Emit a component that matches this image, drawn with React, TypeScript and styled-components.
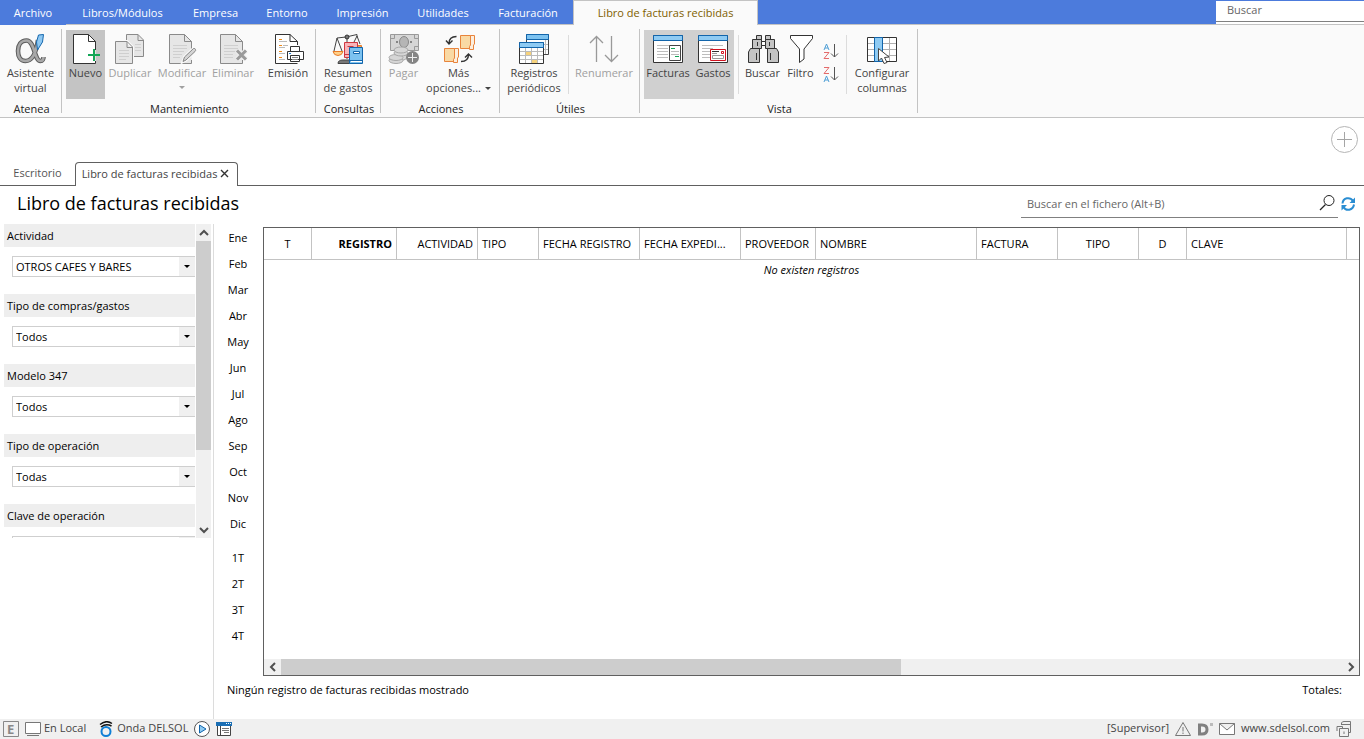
import React from "react";
import styled, { createGlobalStyle, css } from "styled-components";

const GlobalStyle = createGlobalStyle`
  * { box-sizing: border-box; }
  body {
    margin: 0;
    background: #fff;
    color: #000;
    font-family: "Open Sans", "Noto Sans", sans-serif;
    font-size: 11px;
    line-height: 15px;
  }
  button, input, select { font: inherit; color: inherit; margin: 0; }
  button { border: 0; padding: 0; background: none; cursor: pointer; }
`;

const Window = styled.div`
  display: flex;
  flex-direction: column;
  min-height: 100vh;
`;

/* ---------- menu bar ---------- */

const MenuBar = styled.nav`
  display: flex;
  height: 25px;
  background: #4c7bdc;
`;

const MenuItem = styled.button<{ $width: number; $first?: boolean }>`
  width: ${(p) => p.$width}px;
  color: #fff;
  white-space: nowrap;
  ${(p) => !p.$first && css`border-bottom: 1px solid #c3c3c3;`}
`;

const ActiveMenuItem = styled.button`
  width: 185px;
  padding-bottom: 2px;
  background: #fafafa;
  color: #7f6000;
  border: 1px solid #c3c3c3;
  border-bottom: 0;
  white-space: nowrap;
`;

const MenuSpacer = styled.div`
  flex: 1;
  border-bottom: 1px solid #c3c3c3;
`;

const MenuSearch = styled.div`
  width: 148px;
  padding-top: 1px;
  border-bottom: 1px solid #c3c3c3;
  background: linear-gradient(#4c7bdc 1px, #fff 1px);
`;

const MenuSearchInput = styled.input`
  display: block;
  width: 100%;
  height: 21px;
  padding: 0 11px 3px;
  border: 0;
  border-bottom: 1px solid #808080;
  outline: 0;
  background: transparent;
  &::placeholder { color: #666; opacity: 1; }
`;

/* ---------- ribbon ---------- */

const Ribbon = styled.div`
  display: flex;
  height: 93px;
  padding-top: 4px;
  background: #fafafa;
  border-bottom: 1px solid #c3c3c3;
`;

const Group = styled.section<{ $width: number }>`
  display: flex;
  flex-direction: column;
  gap: 2px;
  width: ${(p) => p.$width}px;
  height: 84px;
  padding: 1px 4px 0;
  border-right: 1px solid #c3c3c3;
`;

const GroupRow = styled.div`
  display: flex;
  justify-content: center;
`;

const GroupTitle = styled.h2`
  margin: 0;
  padding-left: 2px;
  font-size: 11px;
  font-weight: 400;
  line-height: 15px;
  text-align: center;
  color: #222;
`;

const RibbonButton = styled.button<{ $width: number; $pressed?: string }>`
  display: flex;
  flex-direction: column;
  align-items: center;
  width: ${(p) => p.$width}px;
  height: 69px;
  padding-top: 3px;
  color: #444;
  background: ${(p) => p.$pressed || "transparent"};
  white-space: nowrap;
  flex-shrink: 0;
  &:disabled { color: #a0a0a0; cursor: default; }
`;

const RibbonDivider = styled.span`
  width: 1px;
  height: 59px;
  margin: 5px 4px 0;
  background: #dcdcdc;
`;

const Caret = styled.span`
  display: inline-block;
  margin-left: 4px;
  vertical-align: 2px;
  border: 3px solid transparent;
  border-top-color: currentColor;
  border-bottom: 0;
`;

const CaretBelow = styled(Caret)`
  margin: 6px 0 0;
`;

const SortColumn = styled.div`
  display: flex;
  flex-direction: column;
  gap: 6px;
  width: 23px;
  padding: 13px 2px 0 3px;
`;

const Icon = styled.svg`
  display: block;
  flex-shrink: 0;
  fill: none;
`;

const Icon32 = ({ children }: { children: React.ReactNode }) => (
  <Icon width="32" height="32" viewBox="0 0 32 32" aria-hidden="true">
    {children}
  </Icon>
);

const Page = ({ stroke, fill }: { stroke: string; fill: string }) => (
  <>
    <path d="M18.500 1.500H3.500V30.500H25.500V8.500Z" fill={fill} />
    <path d="M25.500 18V8.500L18.500 1.500H3.500V30.500H25.500V27M18.500 1.500V8.500H25.500" stroke={stroke} />
  </>
);

const AssistantIcon = () => (
  <Icon32>
    <path d="M23 7C21 21 17 28 10.500 28C5.500 28 3 24 3 18S6 7.500 11.500 7.500C20 7.500 19 28 25.500 28C27.500 28 28.500 26 28.500 24" stroke="#5d5d5d" strokeWidth="4.600" />
    <path d="M23 7C21 21 17 28 10.500 28C5.500 28 3 24 3 18S6 7.500 11.500 7.500C20 7.500 19 28 25.500 28C27.500 28 28.500 26 28.500 24" stroke="#a8a8a8" strokeWidth="2.600" />
    <path d="M23.500 2L28.500 1.500L27.500 9L22.500 17L21.500 9Z" fill="#8ec8f2" stroke="#1668ae" />
  </Icon32>
);

const NewIcon = () => (
  <Icon32>
    <path d="M18.500 1.500H3.500V30.500H25.500V8.500Z" fill="#fff" />
    <path d="M25.500 17V8.500L18.500 1.500H3.500V30.500H25.500V28M18.500 1.500V8.500H25.500" stroke="#333" />
    <path d="M24 16V28M18 22H30" stroke="#12a656" strokeWidth="2" />
  </Icon32>
);

const DuplicateIcon = () => (
  <Icon32>
    <path d="M12.500 1.500H24L29.500 7V23.500H12.500Z" fill="#e6e6e6" stroke="#8a8a8a" />
    <path d="M24 1.500V7.500H29.500" stroke="#8a8a8a" />
    <path d="M21 11.500H27M21 14.500H27M21 17.500H27" stroke="#cfcfcf" />
    <path d="M1.500 8.500H13L18.500 14V30.500H1.500Z" fill="#e6e6e6" stroke="#fafafa" strokeWidth="3" />
    <path d="M1.500 8.500H13L18.500 14V30.500H1.500ZM13 8.500V14.500H18.500" fill="#e6e6e6" stroke="#8a8a8a" />
    <path d="M5 17.500H15M5 20.500H15M5 23.500H15M5 26.500H12" stroke="#cfcfcf" />
  </Icon32>
);

const EditIcon = () => (
  <Icon32>
    <Page stroke="#8a8a8a" fill="#e6e6e6" />
    <path d="M7 12.500H21M7 15.500H21M7 18.500H18M7 21.500H16M7 24.500H14" stroke="#cfcfcf" />
    <path d="M17 28.500L18.500 24L27.500 15.500Q29 15 29.500 16.500Q30 17.500 29 18.500L20 27Z" fill="#d4d4d4" stroke="#fafafa" strokeWidth="3" />
    <path d="M17 28.500L18.500 24L27.500 15.500Q29 15 29.500 16.500Q30 17.500 29 18.500L20 27Z" fill="#d4d4d4" stroke="#858585" />
  </Icon32>
);

const DeleteIcon = () => (
  <Icon32>
    <Page stroke="#8a8a8a" fill="#e6e6e6" />
    <path d="M7 12.500H21M7 15.500H21M7 18.500H18M7 21.500H16M7 24.500H16" stroke="#cfcfcf" />
    <path d="M20 17.500L29 26.500M29 17.500L20 26.500" stroke="#eee" strokeWidth="5" />
    <path d="M20 17.500L29 26.500M29 17.500L20 26.500" stroke="#9a9a9a" strokeWidth="3" />
  </Icon32>
);

const IssueIcon = () => (
  <Icon32>
    <path d="M25.500 12V8.500L18 1.500H3.500V30.500H25.500V8.500Z" fill="#fff" />
    <path d="M25.500 12V8.500L18 1.500H3.500V30.500H25.500M18 1.500V8.500H25.500" stroke="#333" />
    <path d="M7 6.500H10M7 12.500H10M7 18.500H10M7 24.500H10" stroke="#ef8a17" />
    <path d="M7 8.500H15M11 12.500H16M7 14.500H13M7 20.500H13M7 26.500H13" stroke="#bbb" />
    <path d="M15.500 18.500H31.500V26.500H15.500ZM18.500 18.500V13.500H27.500V18.500M18.500 22.500H27.500V28.500H18.500Z" fill="#fff" stroke="#333" />
    <path d="M17 20.500H19" stroke="#1a7bd0" />
    <path d="M20 24.500H26M20 26.500H26" stroke="#888" />
  </Icon32>
);

const SummaryIcon = () => (
  <Icon32>
    <path d="M5 5L14 4L25 1.500V4M15 5V26M5 5L2 18M5 5L10 18M25 3L28 11M25 3L22 9" stroke="#444" />
    <circle cx="15" cy="4" r="2" fill="#777" stroke="#333" />
    <path d="M1 18.500H11Q10 22.500 6 22.500T1 18.500Z" fill="#ffd18a" stroke="#e87b28" />
    <path d="M6 30.500Q6 27 11 27H19V30.500Z" fill="#777" stroke="#444" />
    <path d="M25 12.500H29.500V14H25Z" fill="#f7c77c" stroke="#e87b28" />
    <path d="M12.500 9.500H25.500V24.500H12.500Z" fill="#f8b4b8" stroke="#cf3740" />
    <path d="M12.500 21.500H25M15.500 13.500H21.500" stroke="#cf3740" />
    <path d="M17.500 14.500H30.500V30.500H17.500Z" fill="#7cc2f0" stroke="#1265ab" />
    <path d="M17.500 27.500H30" stroke="#1265ab" />
    <path d="M19 28.500H30" stroke="#fff" />
    <path d="M21.500 18.500H27.500V20.500H21.500Z" fill="#fff" stroke="#1265ab" />
  </Icon32>
);

const PayIcon = () => (
  <Icon32>
    <path d="M2.500 1.500H30.500V17.500H2.500Z" fill="#d6d6d6" stroke="#9a9a9a" />
    <path d="M2 5.500H6.500V1.500M26.500 1.500V5.500H31M31 13.500H26.500V17.500" stroke="#999" />
    <ellipse cx="16" cy="9" rx="4.500" ry="5.500" fill="#b5b5b5" stroke="#8a8a8a" />
    <path d="M8 9H10M22 9H24" stroke="#858585" strokeWidth="2" />
    <g fill="#d6d6d6" stroke="#a8a8a8">
      <ellipse cx="12" cy="24" rx="7" ry="3.500" />
      <ellipse cx="8" cy="27.500" rx="7" ry="3" />
      <ellipse cx="8" cy="24.500" rx="7" ry="3" />
      <ellipse cx="13" cy="20" rx="7" ry="3" />
      <ellipse cx="13" cy="17" rx="7" ry="3" />
    </g>
    <circle cx="24.500" cy="24.500" r="6.500" fill="#858585" />
    <path d="M24.500 20V29M20 24.500H29" stroke="#eee" />
  </Icon32>
);

const MoreIcon = () => (
  <Icon32>
    <g fill="#f9d9a4" stroke="#e8843c">
      <path d="M17.500 2.500H28.500V15.500H17.500Z" />
      <path d="M27.500 2.500H31.500V11L30.500 12V16.500H26.500V13.500L27.500 12Z" fill="#fceedd" />
      <path d="M1.500 15.500H12.500V28.500H1.500Z" />
      <path d="M11.500 15.500H15.500V24L14.500 25V29.500H10.500V26.500L11.500 25Z" fill="#fceedd" />
    </g>
    <path d="M13.500 3.500Q6 3.500 6 10.500M3 7.500L6 11L9.500 7.500" stroke="#333" strokeWidth="1.400" />
    <path d="M18 28.500Q25.500 28.500 25.500 21.500M22 24.500L25.500 21L29 24.500" stroke="#333" strokeWidth="1.400" />
  </Icon32>
);

const CalendarIcon = () => (
  <Icon32>
    <path d="M8.500 1.500H30.500V21.500H8.500Z" fill="#fff" stroke="#444" />
    <path d="M8.500 1.500H30.500V6.500H8.500Z" fill="#7cc2f0" stroke="#1265ab" />
    <path d="M27.500 7V21M26 11.500H30M26 16.500H30" stroke="#bbb" />
    <path d="M1.500 9.500H25.500V30.500H1.500Z" fill="#fff" stroke="#333" />
    <path d="M8 19H13V22H8ZM14 27H19V30H14Z" fill="#f6d27c" />
    <path d="M7.500 15V30M13.500 15V30M19.500 15V30M2 18.500H25M2 22.500H25M2 26.500H25" stroke="#bbb" />
    <path d="M1.500 9.500H25.500V14.500H1.500Z" fill="#8fcbf3" stroke="#1265ab" />
  </Icon32>
);

const RenumberIcon = () => (
  <Icon32>
    <path d="M8.500 29V3.500M2 10L8.500 3.500L15 10M23.500 3V28.500M17 22L23.500 28.500L30 22" stroke="#999" strokeWidth="1.300" />
  </Icon32>
);

const WindowFrame = () => (
  <>
    <path d="M1.500 2.500H30.500V29.500H1.500Z" fill="#fff" stroke="#333" />
    <path d="M1.500 2.500H30.500V7.500H1.500Z" fill="#8fcbf3" stroke="#1265ab" />
    <path d="M5 12.500H26M5 15.500H16M5 18.500H16M5 21.500H16M5 24.500H16" stroke="#bdbdbd" />
  </>
);

const InvoicesIcon = () => (
  <Icon32>
    <WindowFrame />
    <path d="M17.500 12.500H28.500V27.500H17.500Z" fill="#fff" stroke="#444" />
    <path d="M19 15.500H23M23 23.500H27" stroke="#12a656" />
    <path d="M19 18.500H27M19 21.500H27" stroke="#bbb" />
  </Icon32>
);

const ExpensesIcon = () => (
  <Icon32>
    <WindowFrame />
    <path d="M13.500 16.500H28.500V27.500H13.500Z" fill="#fff" stroke="#d0121f" />
    <path d="M15 18.500H22" stroke="#333" />
    <path d="M15 20.500H20M15.500 22.500H26.500V25.500H15.500Z" stroke="#999" />
    <path d="M24.500 18.500H26.500V20.500H24.500Z" stroke="#d0121f" />
  </Icon32>
);

const BinocularsIcon = () => (
  <Icon32>
    <g fill="#c4c4c4" stroke="#333">
      <path d="M9.500 2.500H14.500V7H9.500ZM18.500 2.500H23.500V7H18.500Z" />
      <path d="M5.500 6.500H14.500V15.500H5.500ZM18.500 6.500H27.500V15.500H18.500Z" />
      <path d="M14.500 8.500H18.500V12.500H14.500Z" fill="#fff" />
      <path d="M3.500 15.500H12.500V29.500H1.500V19ZM20.500 15.500H29.500L31.500 19V29.500H20.500Z" />
    </g>
    <path d="M9.500 20V27M23.500 20V27M10.500 9V13M22.500 9V13" stroke="#333" />
  </Icon32>
);

const FilterIcon = () => (
  <Icon32>
    <path d="M5.500 2.500H27.500V5.500L19 16V26L14.500 29.500V16L5.500 5.500Z" fill="#fff" stroke="#333" />
  </Icon32>
);

const ColumnsIcon = () => (
  <Icon32>
    <path d="M1.500 4.500H30.500V28.500H1.500Z" fill="#fff" stroke="#333" />
    <path d="M2 10.500H30M2 16.500H30M2 22.500H30M16.500 5V28M23.500 5V28" stroke="#b0b0b0" />
    <path d="M8.500 4.500H16.500V28.500H8.500Z" fill="#8fcbf3" stroke="#1265ab" />
    <path d="M12.500 15.500V28L15.500 25L18 30.500L21 29.500L18.500 24.500L23 24Z" fill="#fff" stroke="#444" />
  </Icon32>
);

const SortIcon = ({ reversed }: { reversed?: boolean }) => (
  <Icon width="18" height="17" viewBox="0 0 18 17" aria-hidden="true">
    <path d={reversed ? "M2 16L4.500 10L7 16M3 14H6" : "M2 7L4.500 1L7 7M3 5H6"} stroke="#4f9fd6" />
    <path d={reversed ? "M2 1.500H7L2 7.500H7" : "M2 9.500H7L2 15.500H7"} stroke="#e46a6a" />
    <path d="M12.500 1V14M9 10.500L12.500 14L16 10.500" stroke="#555" />
  </Icon>
);

/* ---------- document tabs ---------- */

const TabStrip = styled.div`
  display: flex;
  flex-direction: column;
  height: 68px;
`;

const AddRow = styled.div`
  display: flex;
  justify-content: flex-end;
  height: 44px;
  padding: 7px 5px 0 0;
`;

const AddButton = styled.button`
  width: 28px;
  height: 28px;
`;

const TabRow = styled.div`
  display: flex;
  height: 24px;
`;

const Tab = styled.button`
  width: 75px;
  padding-bottom: 2px;
  border-bottom: 1px solid #606060;
  color: #555;
`;

const ActiveTab = styled.div`
  display: flex;
  align-items: center;
  justify-content: center;
  gap: 3px;
  width: 163px;
  padding: 0 2px 2px 0;
  border: 1px solid #606060;
  border-bottom: 0;
  border-radius: 4px 4px 0 0;
  color: #444;
  white-space: nowrap;
`;

const CloseButton = styled.button`
  width: 9px;
  height: 9px;
`;

const TabRule = styled.div`
  flex: 1;
  border-bottom: 1px solid #606060;
`;

/* ---------- document header ---------- */

const TitleBar = styled.header`
  display: flex;
  justify-content: space-between;
  height: 38px;
  padding: 0 8px 0 17px;
`;

const Title = styled.h1`
  margin: 0;
  font-size: 18px;
  font-weight: 400;
  line-height: 34px;
`;

const SearchArea = styled.div`
  display: flex;
  gap: 2px;
  height: 32px;
`;

const FileSearch = styled.label`
  display: flex;
  align-items: center;
  width: 317px;
  height: 32px;
  padding: 3px 3px 0 6px;
  border-bottom: 1px solid #808080;
`;

const FileSearchInput = styled.input`
  flex: 1;
  min-width: 0;
  padding: 0;
  border: 0;
  outline: 0;
  &::placeholder { color: #666; opacity: 1; }
`;

const RefreshButton = styled.button`
  padding-top: 3px;
`;

/* ---------- filters ---------- */

const Body = styled.main`
  display: flex;
  flex: 1;
`;

const Sidebar = styled.aside`
  width: 214px;
  padding-left: 4px;
  border-right: 1px solid #dcdcdc;
`;

const FilterViewport = styled.div`
  display: flex;
  gap: 1px;
  height: 314px;
  overflow: hidden;
`;

const FilterList = styled.div`
  width: 191px;
`;

const FilterField = styled.div`
  display: flex;
  flex-direction: column;
  gap: 9px;
  height: 70px;
`;

const FilterLabel = styled.label`
  padding-left: 3px;
  background: #eee;
  line-height: 23px;
`;

const SelectBox = styled.div`
  position: relative;
  height: 21px;
  margin-left: 8px;
`;

const Select = styled.select`
  display: block;
  width: 100%;
  height: 21px;
  padding: 0 16px 0 3px;
  border: 1px solid #cfcfcf;
  border-right: 0;
  border-radius: 0;
  appearance: none;
  outline: 0;
  background: #fff;
`;

const SelectArrow = styled.span`
  position: absolute;
  top: 1px;
  right: 0;
  display: flex;
  align-items: center;
  justify-content: center;
  width: 16px;
  height: 19px;
  background: #f0f0f0;
  pointer-events: none;
  &::after {
    content: "";
    border: 3px solid transparent;
    border-top-color: #000;
    border-bottom: 0;
  }
`;

const VerticalScroll = styled.div`
  display: flex;
  flex-direction: column;
  width: 15px;
  background: #f0f0f0;
`;

const ScrollButton = styled.button<{ $width: number }>`
  display: flex;
  align-items: center;
  justify-content: center;
  width: ${(p) => p.$width}px;
  height: 17px;
`;

const VerticalThumb = styled.div`
  height: 209px;
  margin-bottom: auto;
  background: #cdcdcd;
`;

const Chevron = ({ d }: { d: string }) => (
  <Icon width="10" height="10" viewBox="0 0 10 10" aria-hidden="true">
    <path d={d} stroke="#505050" strokeWidth="2" />
  </Icon>
);

/* ---------- periods and grid ---------- */

const Content = styled.div`
  display: flex;
  flex: 1;
  flex-direction: column;
  min-width: 0;
`;

const Workspace = styled.div`
  display: flex;
  flex: 1;
`;

const Periods = styled.div`
  display: flex;
  flex-direction: column;
  width: 48px;
  margin-right: 1px;
`;

const Months = styled.div`
  display: flex;
  flex-direction: column;
  margin-bottom: 8px;
`;

const PeriodButton = styled.button`
  height: 26px;
`;

const GridFrame = styled.div`
  display: flex;
  flex: 1;
  flex-direction: column;
  justify-content: space-between;
  min-width: 0;
  margin: 3px 4px 0 0;
  border: 1px solid #606060;
`;

const Table = styled.table`
  width: 100%;
  table-layout: fixed;
  border-collapse: separate;
  border-spacing: 0;
`;

const HeadCell = styled.th<{ $align: string; $bold?: boolean; $last?: boolean }>`
  height: 32px;
  padding: 0 4px;
  border-bottom: 1px solid #c3c3c3;
  ${(p) => !p.$last && css`border-right: 1px solid #c3c3c3;`}
  font-weight: ${(p) => (p.$bold ? 700 : 400)};
  text-align: ${(p) => p.$align};
  white-space: nowrap;
`;

const EmptyCell = styled.td`
  padding: 2px 0;
  font-style: italic;
  text-align: center;
`;

const HorizontalScroll = styled.div`
  display: flex;
  align-items: center;
  justify-content: space-between;
  height: 16px;
  background: #f0f0f0;
`;

const ScrollTrack = styled.div`
  flex: 1;
`;

const HorizontalThumb = styled.div`
  width: 59%;
  height: 16px;
  max-width: 620px;
  background: #cdcdcd;
`;

const Summary = styled.footer`
  display: flex;
  justify-content: space-between;
  height: 43px;
  padding: 6px 22px 0 13px;
`;

/* ---------- status bar ---------- */

const StatusBar = styled.footer`
  display: flex;
  align-items: center;
  justify-content: space-between;
  height: 20px;
  padding: 0 12px 0 3px;
  background: #f0f0f0;
  color: #444;
`;

const StatusGroup = styled.div`
  display: flex;
  align-items: center;
  gap: 6px;
  line-height: 14px;
`;

const StatusItem = styled.button`
  display: flex;
  align-items: center;
  gap: 3px;
`;

const StatusText = styled.span`
  padding-bottom: 2px;
`;

const WaveItem = styled(StatusItem)`
  margin-left: 6px;
`;

const StatusLink = styled.a`
  padding-bottom: 2px;
  color: inherit;
  text-decoration: none;
`;

const StatusIcon = ({ children }: { children: React.ReactNode }) => (
  <Icon width="16" height="16" viewBox="0 0 16 16" aria-hidden="true">
    {children}
  </Icon>
);

const StatusLetter = styled.text`
  font-size: 13px;
  font-weight: 700;
`;

const menuItems = [
  { label: "Archivo", width: 66 },
  { label: "Libros/Módulos", width: 113 },
  { label: "Empresa", width: 73 },
  { label: "Entorno", width: 70 },
  { label: "Impresión", width: 81 },
  { label: "Utilidades", width: 80 },
  { label: "Facturación", width: 90 },
];

const filters = [
  { id: "actividad", label: "Actividad", value: "OTROS CAFES Y BARES" },
  { id: "compras", label: "Tipo de compras/gastos", value: "Todos" },
  { id: "modelo", label: "Modelo 347", value: "Todos" },
  { id: "operacion", label: "Tipo de operación", value: "Todas" },
  { id: "clave", label: "Clave de operación", value: "" },
];

const months = ["Ene", "Feb", "Mar", "Abr", "May", "Jun", "Jul", "Ago", "Sep", "Oct", "Nov", "Dic"];
const quarters = ["1T", "2T", "3T", "4T"];

const columns = [
  { label: "T", width: 48, align: "center" },
  { label: "REGISTRO", width: 85, align: "right", bold: true },
  { label: "ACTIVIDAD", width: 81, align: "right" },
  { label: "TIPO", width: 61, align: "left" },
  { label: "FECHA REGISTRO", width: 101, align: "left" },
  { label: "FECHA EXPEDI...", width: 101, align: "left" },
  { label: "PROVEEDOR", width: 75, align: "left" },
  { label: "NOMBRE", width: 161, align: "left" },
  { label: "FACTURA", width: 81, align: "left" },
  { label: "TIPO", width: 81, align: "center" },
  { label: "D", width: 48, align: "center" },
  { label: "CLAVE", width: 160, align: "left" },
];

export default function App() {
  return (
    <Window>
      <GlobalStyle />
      <MenuBar>
        {menuItems.map((item, i) => (
          <MenuItem key={item.label} $width={item.width} $first={i === 0}>{item.label}</MenuItem>
        ))}
        <ActiveMenuItem>Libro de facturas recibidas</ActiveMenuItem>
        <MenuSpacer />
        <MenuSearch>
          <MenuSearchInput placeholder="Buscar" aria-label="Buscar" />
        </MenuSearch>
      </MenuBar>

      <Ribbon>
        <Group $width={62}>
          <GroupRow>
            <RibbonButton $width={53}><AssistantIcon />Asistente<br />virtual</RibbonButton>
          </GroupRow>
          <GroupTitle>Atenea</GroupTitle>
        </Group>
        <Group $width={254}>
          <GroupRow>
            <RibbonButton $width={39} $pressed="#c4c4c4"><NewIcon />Nuevo</RibbonButton>
            <RibbonButton $width={50} disabled><DuplicateIcon />Duplicar</RibbonButton>
            <RibbonButton $width={54} disabled><EditIcon />Modificar<CaretBelow /></RibbonButton>
            <RibbonButton $width={48} disabled><DeleteIcon />Eliminar</RibbonButton>
            <RibbonDivider />
            <RibbonButton $width={46}><IssueIcon />Emisión</RibbonButton>
          </GroupRow>
          <GroupTitle>Mantenimiento</GroupTitle>
        </Group>
        <Group $width={65}>
          <GroupRow>
            <RibbonButton $width={56}><SummaryIcon />Resumen<br />de gastos</RibbonButton>
          </GroupRow>
          <GroupTitle>Consultas</GroupTitle>
        </Group>
        <Group $width={119}>
          <GroupRow>
            <RibbonButton $width={37} disabled><PayIcon />Pagar</RibbonButton>
            <RibbonButton $width={73}><MoreIcon />Más<span>opciones...<Caret /></span></RibbonButton>
          </GroupRow>
          <GroupTitle>Acciones</GroupTitle>
        </Group>
        <Group $width={140}>
          <GroupRow>
            <RibbonButton $width={60}><CalendarIcon />Registros<br />periódicos</RibbonButton>
            <RibbonDivider />
            <RibbonButton $width={62} disabled><RenumberIcon />Renumerar</RibbonButton>
          </GroupRow>
          <GroupTitle>Útiles</GroupTitle>
        </Group>
        <Group $width={278}>
          <GroupRow>
            <RibbonButton $width={48} $pressed="#d0d0d0"><InvoicesIcon />Facturas</RibbonButton>
            <RibbonButton $width={42} $pressed="#d0d0d0"><ExpensesIcon />Gastos</RibbonButton>
            <RibbonDivider />
            <RibbonButton $width={39}><BinocularsIcon />Buscar</RibbonButton>
            <RibbonButton $width={37}><FilterIcon />Filtro</RibbonButton>
            <SortColumn>
              <button aria-label="Orden ascendente"><SortIcon /></button>
              <button aria-label="Orden descendente"><SortIcon reversed /></button>
            </SortColumn>
            <RibbonDivider />
            <RibbonButton $width={62}><ColumnsIcon />Configurar<br />columnas</RibbonButton>
          </GroupRow>
          <GroupTitle>Vista</GroupTitle>
        </Group>
      </Ribbon>

      <TabStrip>
        <AddRow>
          <AddButton aria-label="Añadir">
            <Icon width="28" height="28" viewBox="0 0 28 28">
              <circle cx="13.500" cy="14.500" r="13" stroke="#b5b5b5" />
              <path d="M13.500 7V22M6 14.500H21" stroke="#a5a5a5" />
            </Icon>
          </AddButton>
        </AddRow>
        <TabRow>
          <Tab>Escritorio</Tab>
          <ActiveTab>
            Libro de facturas recibidas
            <CloseButton aria-label="Cerrar">
              <Icon width="9" height="9" viewBox="0 0 9 9">
                <path d="M1 1L8 8M8 1L1 8" stroke="#333" strokeWidth="1.400" />
              </Icon>
            </CloseButton>
          </ActiveTab>
          <TabRule />
        </TabRow>
      </TabStrip>

      <TitleBar>
        <Title>Libro de facturas recibidas</Title>
        <SearchArea>
          <FileSearch>
            <FileSearchInput placeholder="Buscar en el fichero (Alt+B)" aria-label="Buscar en el fichero" />
            <StatusIcon>
              <circle cx="10" cy="5.500" r="5" stroke="#222" />
              <path d="M6.500 9.500L1 15" stroke="#222" strokeWidth="1.300" />
            </StatusIcon>
          </FileSearch>
          <RefreshButton aria-label="Actualizar">
            <Icon width="16" height="16" viewBox="0 0 16 16">
              <path d="M2.500 7.500C3 1.500 10 .5 13 5M14 8.500C13 14.500 6 15.500 3.500 11" stroke="#2a8dd2" strokeWidth="2" />
              <path d="M15 1.500V7H9.500ZM1.500 14.500V9H7Z" fill="#2a8dd2" />
            </Icon>
          </RefreshButton>
        </SearchArea>
      </TitleBar>

      <Body>
        <Sidebar>
          <FilterViewport>
            <FilterList>
              {filters.map((f) => (
                <FilterField key={f.id}>
                  <FilterLabel htmlFor={f.id}>{f.label}</FilterLabel>
                  <SelectBox>
                    <Select id={f.id}><option>{f.value}</option></Select>
                    <SelectArrow />
                  </SelectBox>
                </FilterField>
              ))}
            </FilterList>
            <VerticalScroll>
              <ScrollButton $width={15} aria-label="Subir"><Chevron d="M1 7L5 3L9 7" /></ScrollButton>
              <VerticalThumb />
              <ScrollButton $width={15} aria-label="Bajar"><Chevron d="M1 3L5 7L9 3" /></ScrollButton>
            </VerticalScroll>
          </FilterViewport>
        </Sidebar>

        <Content>
          <Workspace>
            <Periods>
              <Months>{months.map((m) => <PeriodButton key={m}>{m}</PeriodButton>)}</Months>
              {quarters.map((q) => <PeriodButton key={q}>{q}</PeriodButton>)}
            </Periods>
            <GridFrame>
              <Table>
                <colgroup>
                  {columns.map((c, i) => <col key={i} width={c.width} />)}
                  <col />
                </colgroup>
                <thead>
                  <tr>
                    {columns.map((c, i) => (
                      <HeadCell key={i} $align={c.align} $bold={c.bold}>{c.label}</HeadCell>
                    ))}
                    <HeadCell $align="left" $last />
                  </tr>
                </thead>
                <tbody>
                  <tr><EmptyCell colSpan={13}>No existen registros</EmptyCell></tr>
                </tbody>
              </Table>
              <HorizontalScroll>
                <ScrollButton $width={17} aria-label="Izquierda"><Chevron d="M7 1L3 5L7 9" /></ScrollButton>
                <ScrollTrack><HorizontalThumb /></ScrollTrack>
                <ScrollButton $width={17} aria-label="Derecha"><Chevron d="M3 1L7 5L3 9" /></ScrollButton>
              </HorizontalScroll>
            </GridFrame>
          </Workspace>
          <Summary>
            <span>Ningún registro de facturas recibidas mostrado</span>
            <span>Totales:</span>
          </Summary>
        </Content>
      </Body>

      <StatusBar>
        <StatusGroup>
          <StatusIcon>
            <path d="M.5 .5H15.500V15.500H.5Z" stroke="#888" />
            <StatusLetter x="4" y="13" fill="#888">E</StatusLetter>
          </StatusIcon>
          <StatusItem>
            <StatusIcon>
              <path d="M.5 1.500H15.500V12.500H.5ZM2 14.500H14" stroke="#777" fill="#fff" />
            </StatusIcon>
            <StatusText>En Local</StatusText>
          </StatusItem>
          <WaveItem>
            <StatusIcon>
              <circle cx="8" cy="10.500" r="4.500" stroke="#0f7fd6" strokeWidth="2" />
              <path d="M2 3.500Q8 -1.500 14 2.500M3 6Q8 2 13.500 5" stroke="#111" strokeWidth="1.500" />
            </StatusIcon>
            <StatusText>Onda DELSOL</StatusText>
          </WaveItem>
          <StatusItem aria-label="Reproducir">
            <StatusIcon>
              <circle cx="8" cy="8" r="7.500" fill="#fff" stroke="#555" />
              <path d="M5.500 4L12 8L5.500 12Z" fill="#8fcbf3" stroke="#1265ab" />
            </StatusIcon>
          </StatusItem>
          <StatusItem aria-label="Ventana">
            <StatusIcon>
              <path d="M1.500 5V14.500H14.500V5" fill="#fff" stroke="#444" />
              <path d="M0 1H16V5H0Z" fill="#1b6fb5" />
              <path d="M10 2.500H11M12 2.500H13M14 2.500H15" stroke="#fff" />
              <path d="M4.500 5V14" stroke="#444" />
              <path d="M6 7.500H13M6 9.500H13M8 11.500H13" stroke="#777" />
            </StatusIcon>
          </StatusItem>
        </StatusGroup>
        <StatusGroup>
          <StatusText>[Supervisor]</StatusText>
          <StatusIcon>
            <path d="M8 1.500L15.500 14.500H.5ZM8 6V10.500M8 11.500V13" stroke="#777" />
          </StatusIcon>
          <StatusIcon>
            <path d="M2.500 4H5Q10 4 10 8.500T5 13H2.500Z" stroke="#808080" strokeWidth="3" />
            <path d="M13 2H16V5H13Z" fill="#bbb" />
          </StatusIcon>
          <StatusIcon>
            <path d="M.5 2.500H15.500V13.500H.5ZM.5 2.500L8 9L15.500 2.500" stroke="#777" fill="#fff" />
          </StatusIcon>
          <StatusLink href="#">www.sdelsol.com</StatusLink>
          <StatusIcon>
            <path d="M5.500 4V2Q6 .5 8 .5H14.500V11.500H13M5.500 3.500H14.500M3.500 7.500H12.500V15.500H3.500ZM1 10V5.500H6.500V7.500M8 10.500V13" stroke="#777" />
          </StatusIcon>
        </StatusGroup>
      </StatusBar>
    </Window>
  );
}
